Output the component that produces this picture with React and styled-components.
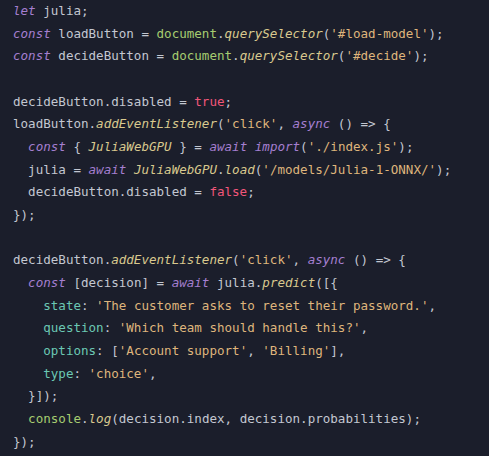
import React from 'react'
import styled, { createGlobalStyle } from 'styled-components'

const GlobalStyle = createGlobalStyle`
  html, body {
    margin: 0;
    padding: 0;
    background: #1b1e2b;
  }
`

// token colours, roughly a palenight-ish scheme
const colors = {
  kw: '#a57fd0',
  fn: '#d9c98e',
  obj: '#a6cc70',
  str: '#dfb57c',
  prop: '#6bc8b4',
  bool: '#f2567a',
  plain: '#c3c7d1',
}

const lines = [
  [['kw', 'let'], ['plain', ' julia;']],
  [['kw', 'const'], ['plain', ' loadButton = '], ['obj', 'document'], ['plain', '.'], ['fn', 'querySelector'], ['plain', '('], ['str', "'#load-model'"], ['plain', ');']],
  [['kw', 'const'], ['plain', ' decideButton = '], ['obj', 'document'], ['plain', '.'], ['fn', 'querySelector'], ['plain', '('], ['str', "'#decide'"], ['plain', ');']],
  [],
  [['plain', 'decideButton.disabled = '], ['bool', 'true'], ['plain', ';']],
  [['plain', 'loadButton.'], ['fn', 'addEventListener'], ['plain', '('], ['str', "'click'"], ['plain', ', '], ['kw', 'async'], ['plain', ' () => {']],
  [['plain', '  '], ['kw', 'const'], ['plain', ' { '], ['fn', 'JuliaWebGPU'], ['plain', ' } = '], ['kw', 'await'], ['plain', ' '], ['kw', 'import'], ['plain', '('], ['str', "'./index.js'"], ['plain', ');']],
  [['plain', '  julia = '], ['kw', 'await'], ['plain', ' '], ['fn', 'JuliaWebGPU'], ['plain', '.'], ['fn', 'load'], ['plain', '('], ['str', "'/models/Julia-1-ONNX/'"], ['plain', ');']],
  [['plain', '  decideButton.disabled = '], ['bool', 'false'], ['plain', ';']],
  [['plain', '});']],
  [],
  [['plain', 'decideButton.'], ['fn', 'addEventListener'], ['plain', '('], ['str', "'click'"], ['plain', ', '], ['kw', 'async'], ['plain', ' () => {']],
  [['plain', '  '], ['kw', 'const'], ['plain', ' [decision] = '], ['kw', 'await'], ['plain', ' julia.'], ['fn', 'predict'], ['plain', '([{']],
  [['plain', '    '], ['prop', 'state'], ['plain', ': '], ['str', "'The customer asks to reset their password.'"], ['plain', ',']],
  [['plain', '    '], ['prop', 'question'], ['plain', ': '], ['str', "'Which team should handle this?'"], ['plain', ',']],
  [['plain', '    '], ['prop', 'options'], ['plain', ': ['], ['str', "'Account support'"], ['plain', ', '], ['str', "'Billing'"], ['plain', '],']],
  [['plain', '    '], ['prop', 'type'], ['plain', ': '], ['str', "'choice'"], ['plain', ',']],
  [['plain', '  }]);']],
  [['plain', '  '], ['obj', 'console'], ['plain', '.'], ['fn', 'log'], ['plain', '(decision.index, decision.probabilities);']],
  [['plain', '});']],
]

const italic = { kw: true, fn: true }

function App() {
  return (
    <>
      <GlobalStyle />
      <Container>
        <Code>
          {lines.map((tokens, i) => (
            <Line key={i}>
              {tokens.length === 0 ? ' ' : tokens.map(([kind, text], j) => (
                <Token key={j} $kind={kind}>{text}</Token>
              ))}
            </Line>
          ))}
        </Code>
      </Container>
    </>
  )
}

export default App

const Container = styled.div`
width: 489px;
height: 456px;
background-color: #1b1e2b;
overflow: hidden;
box-sizing: border-box;
padding: 0 0 0 13px;
`

const Code = styled.pre`
margin: 0;
font-family: "DejaVu Sans Mono", "Liberation Mono", monospace;
font-size: 12.55px;
line-height: 22.68px;
color: ${colors.plain};
`

const Line = styled.div`
white-space: pre;
height: 22.68px;
`

const Token = styled.span`
color: ${p => colors[p.$kind]};
font-style: ${p => (italic[p.$kind] ? 'italic' : 'normal')};
`
